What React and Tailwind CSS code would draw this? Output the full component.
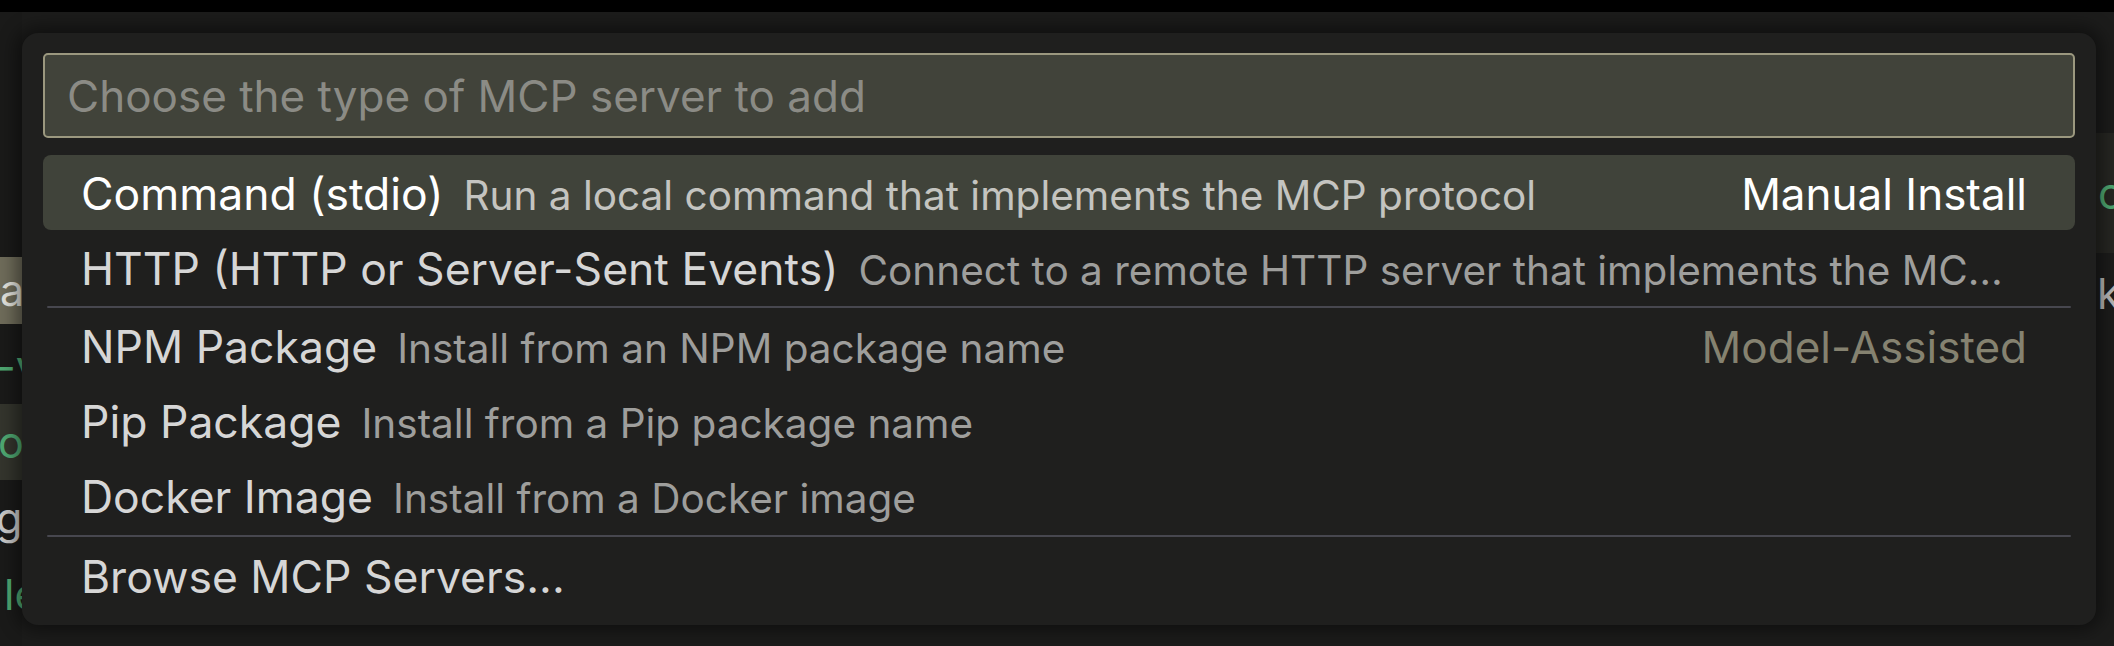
import React from "react";

const items = [
  {
    label: "Command (stdio)",
    desc: "Run a local command that implements the MCP protocol",
    tag: "Manual Install",
    active: true,
  },
  {
    label: "HTTP (HTTP or Server-Sent Events)",
    desc: "Connect to a remote HTTP server that implements the MCP protocol",
  },
  {
    label: "NPM Package",
    desc: "Install from an NPM package name",
    tag: "Model-Assisted",
    separator: true,
  },
  { label: "Pip Package", desc: "Install from a Pip package name" },
  { label: "Docker Image", desc: "Install from a Docker image" },
  { label: "Browse MCP Servers...", separator: true },
];

const Row = ({ item, first }) => {
  return (
    <>
      {item.separator && (
        <div
          className={
            first
              ? "h-[3px] flex items-center px-[4px]"
              : "h-[5px] flex items-center px-[4px]"
          }
        >
          <div className="h-[2px] w-full rounded-full bg-[#47474f]" />
        </div>
      )}
      <div
        className={
          item.active
            ? "flex items-baseline pt-[6px] h-[75px] pl-[38px] pr-[48px] rounded-[8px] bg-[#40433a] whitespace-nowrap"
            : "flex items-baseline pt-[6px] h-[75px] pl-[38px] pr-[48px] rounded-[8px] whitespace-nowrap"
        }
      >
        <span
          className={
            item.active
              ? "text-[44.5px] text-white shrink-0"
              : "text-[44.5px] text-[#d6d6d6] shrink-0"
          }
        >
          {item.label}
        </span>
        {item.desc && (
          <span
            className={
              item.active
                ? "ml-[20px] text-[40.5px] text-[#c4c4c0] truncate min-w-0"
                : "ml-[20px] mr-[24px] text-[40.5px] text-[#9e9e9c] truncate min-w-0"
            }
          >
            {item.desc}
          </span>
        )}
        {item.tag && (
          <span
            className={
              item.active
                ? "ml-auto pl-[30px] text-[44px] text-white shrink-0"
                : "ml-auto pl-[30px] text-[44px] text-[#858270] shrink-0"
            }
          >
            {item.tag}
          </span>
        )}
      </div>
    </>
  );
};

const App = () => {
  return (
    <div
      className="relative w-[2114px] h-[646px] overflow-hidden bg-[#1c1c1b]"
      style={{ fontFamily: "Inter, 'Noto Sans', sans-serif" }}
    >
      <div className="h-[12px] bg-black" />
      <div className="flex h-[634px]">
        {/* editor content peeking out on the left */}
        <div className="w-[22px] shrink-0 overflow-hidden bg-[#1a1a19] text-[43px] whitespace-nowrap">
          <div className="h-[240px]" />
          <div className="h-[76px] flex items-center">
            <span className="bg-[#6f6c5a] text-[#e2e2dc] pr-[20px] h-[67px] flex items-center">
              a
            </span>
          </div>
          <div className="h-[76px] flex items-center text-[#4fa872] -ml-[4px]">-v</div>
          <div className="h-[76px] flex items-center bg-[#34352d] text-[#4fa872] -ml-[2px]">or</div>
          <div className="h-[76px] flex items-center text-[#c8c8c8] -ml-[4px]">go</div>
          <div className="h-[76px] flex items-center text-[#4fa872] pl-[4px]">le</div>
        </div>
        <div className="flex-1" />
        {/* editor content peeking out on the right */}
        <div className="w-[18px] shrink-0 overflow-hidden text-[43px] whitespace-nowrap">
          <div className="h-[121px]" />
          <div className="h-[120px] flex items-center bg-[#262622] text-[#4fa872] pl-[2px]">
            oc
          </div>
          <div className="h-[80px] flex items-center text-[#b8b8b8] pl-[1px]">k</div>
        </div>
      </div>

      {/* quick pick overlay */}
      <div className="absolute left-[22px] top-[33px] w-[2074px] h-[592px] rounded-[16px] bg-[#1f1f1e] px-[21px] pt-[20px] shadow-[0_0_18px_6px_rgba(0,0,0,0.45)]">
        <input
          readOnly
          placeholder="Choose the type of MCP server to add"
          className="w-full h-[85px] rounded-[5px] border-2 border-[#9b987f] bg-[#41433a] px-[22px] text-[44px] text-[#e0e0e0] placeholder:text-[#8b8b85] outline-none"
        />
        <div className="mt-[17px] flex flex-col">
          {items.map((item, index) => (
            <Row key={index} item={item} first={index === 2} />
          ))}
        </div>
      </div>
    </div>
  );
};

export default App;
